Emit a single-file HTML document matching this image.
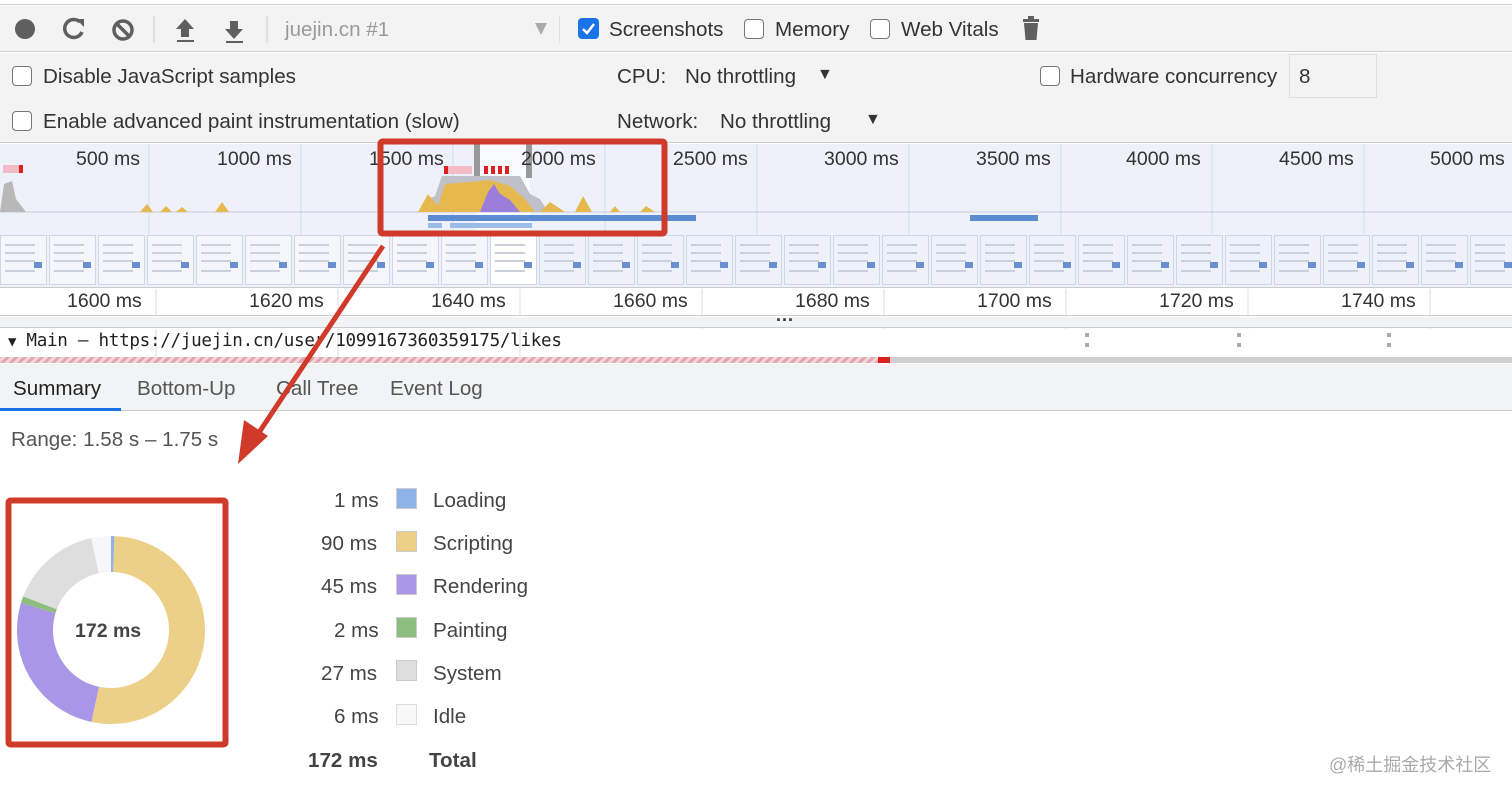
<!DOCTYPE html>
<html><head><meta charset="utf-8">
<style>
*{margin:0;padding:0;box-sizing:border-box}
body{width:1512px;height:795px;overflow:hidden;background:#fff;font-family:"Liberation Sans",Arial,sans-serif;color:#333;position:relative}
.abs{position:absolute}
.t{position:absolute;font-size:20.6px;color:#333;white-space:nowrap}
.cb{position:absolute;width:20px;height:20px;border:1.5px solid #767676;border-radius:4px;background:#fff}
.g{color:#444}
.th{flex:0 0 47px;border:1px solid #cfd6e6;background:#f4f6fb;position:relative}
.th::before{content:"";position:absolute;left:4px;top:8px;width:30px;height:2px;background:#c9cfdb;box-shadow:0 8px 0 #c9cfdb,0 16px 0 #c9cfdb,0 26px 0 #c9cfdb}
.th::after{content:"";position:absolute;right:4px;top:26px;width:8px;height:6px;background:#6a8fd0}
</style></head><body>
<!-- toolbar -->
<div class="abs" style="left:0;top:0;width:1512px;height:5px;background:#fff;border-bottom:1px solid #ccc"></div>
<div class="abs" style="left:0;top:6px;width:1512px;height:46px;background:#f3f3f3;border-bottom:1px solid #d0d0d0"></div>
<svg class="abs" style="left:0;top:6px" width="560" height="46">
 <circle cx="25" cy="23" r="10" fill="#5f5f5f"/>
 <path d="M80 16 A9 9 0 1 0 82 26" fill="none" stroke="#5f5f5f" stroke-width="3.5"/>
 <path d="M76 13 L84 13 L84 21 Z" fill="#5f5f5f"/>
 <circle cx="123" cy="24" r="9" fill="none" stroke="#5f5f5f" stroke-width="3.5"/>
 <path d="M117 18 L129 30" stroke="#5f5f5f" stroke-width="3.5"/>
 <line x1="154" y1="10" x2="154" y2="37" stroke="#ccc"/>
 <path d="M185 13 L194 23 L189 23 L189 31 L181 31 L181 23 L176 23 Z" fill="#5f5f5f"/><rect x="177" y="34" width="17" height="2" fill="#5f5f5f"/>
 <path d="M234 33 L243 23 L238 23 L238 15 L230 15 L230 23 L225 23 Z" fill="#5f5f5f"/><rect x="226" y="35" width="17" height="2" fill="#5f5f5f"/>
 <line x1="267" y1="10" x2="267" y2="37" stroke="#ccc"/>
 <path d="M535 17 L547 17 L541 29 Z" fill="#aaa"/>
 <line x1="560" y1="10" x2="560" y2="37" stroke="#ccc"/>
</svg>
<div class="t" style="left:285px;top:18px;color:#999">juejin.cn #1</div>
<div class="abs" style="left:578px;top:18px;width:21px;height:21px;background:#1a73e8;border-radius:4px"><svg width="21" height="21"><path d="M5 11 L9 15 L16 6" fill="none" stroke="#fff" stroke-width="2.5"/></svg></div>
<div class="t" style="left:609px;top:18px">Screenshots</div>
<div class="cb" style="left:744px;top:19px"></div><div class="t" style="left:775px;top:18px">Memory</div>
<div class="cb" style="left:870px;top:19px"></div><div class="t" style="left:901px;top:18px">Web Vitals</div>
<svg class="abs" style="left:1020px;top:16px" width="22" height="26"><rect x="3" y="3" width="16" height="3" fill="#5f5f5f"/><rect x="8" y="0" width="6" height="3" fill="#5f5f5f"/><path d="M4 7 L18 7 L16.5 24 L5.5 24 Z" fill="#5f5f5f"/></svg>
<!-- settings -->
<div class="abs" style="left:0;top:53px;width:1512px;height:90px;background:#f3f3f3;border-bottom:1px solid #ccc"></div>
<div class="cb" style="left:12px;top:66px"></div><div class="t" style="left:43px;top:65px">Disable JavaScript samples</div>
<div class="cb" style="left:12px;top:111px"></div><div class="t" style="left:43px;top:110px">Enable advanced paint instrumentation (slow)</div>
<div class="t" style="left:617px;top:65px">CPU:</div><div class="t" style="left:685px;top:65px">No throttling</div><div class="t" style="left:817px;top:66px;font-size:16px">▼</div>
<div class="t" style="left:617px;top:110px">Network:</div><div class="t" style="left:720px;top:110px">No throttling</div><div class="t" style="left:865px;top:111px;font-size:16px">▼</div>
<div class="cb" style="left:1040px;top:66px"></div><div class="t" style="left:1070px;top:65px">Hardware concurrency</div>
<div class="abs" style="left:1289px;top:54px;width:88px;height:44px;border:1px solid #ddd;background:#f3f3f3"></div>
<div class="t" style="left:1299px;top:65px">8</div>
<!-- overview -->
<div class="abs" style="left:0;top:144px;width:1512px;height:144px;background:#eef1f9;border-bottom:1px solid #ccc"></div>
<div class="abs" style="left:476px;top:144px;width:54px;height:92px;background:#fafbfe"></div>
<svg class="abs" style="left:0;top:144px" width="1512" height="144">
 <g stroke="#d5dae6"><line x1="149" y1="0" x2="149" y2="90"/><line x1="301" y1="0" x2="301" y2="90"/><line x1="453" y1="0" x2="453" y2="90"/><line x1="605" y1="0" x2="605" y2="90"/><line x1="757" y1="0" x2="757" y2="90"/><line x1="909" y1="0" x2="909" y2="90"/><line x1="1061" y1="0" x2="1061" y2="90"/><line x1="1212" y1="0" x2="1212" y2="90"/><line x1="1364" y1="0" x2="1364" y2="90"/></g>
 <line x1="0" y1="68" x2="1512" y2="68" stroke="#c8ccd6"/>
 <rect x="3" y="21" width="16" height="8" fill="#f2bcc6"/><rect x="19" y="21" width="4" height="8" fill="#e02020"/>
 <path d="M0 68 L4 40 L12 37 L16 55 L26 68 Z" fill="#b8b8b8"/>
 <path d="M140 68 L147 60 L153 68 M160 68 L166 62 L172 68 M176 68 L182 63 L188 68 M215 68 L222 58 L229 68" fill="#e5b94e"/>
 <rect x="444" y="22" width="28" height="8" fill="#f2bcc6"/><rect x="444" y="22" width="4" height="8" fill="#e02020"/>
 <rect x="474" y="0" width="6" height="34" fill="#999"/><rect x="526" y="0" width="6" height="34" fill="#999"/>
 <rect x="484" y="22" width="4" height="8" fill="#e02020"/><rect x="491" y="22" width="4" height="8" fill="#e02020"/><rect x="498" y="22" width="4" height="8" fill="#e02020"/><rect x="505" y="22" width="4" height="8" fill="#e02020"/>
 <path d="M418 68 L428 55 L435 52 L442 32 L520 32 L530 50 L540 55 L548 68 Z" fill="#c0c0c8"/>
 <path d="M418 68 L428 50 L438 62 L445 40 L470 38 L490 36 L510 42 L525 55 L535 68 Z" fill="#e5b94e"/>
 <path d="M540 68 L550 58 L565 68 M575 68 L583 52 L592 68 M610 68 L615 62 L620 68 M640 68 L646 62 L655 68" fill="#e5b94e"/>
 <path d="M480 68 L488 48 L494 40 L500 50 L510 56 L520 68 Z" fill="#9b7ddb"/>
 <rect x="428" y="71" width="268" height="6" fill="#5b8bd1"/>
 <rect x="428" y="79" width="14" height="5" fill="#9bbbe8"/><rect x="450" y="79" width="82" height="5" fill="#9bbbe8"/>
 <rect x="970" y="71" width="68" height="6" fill="#5b8bd1"/>
</svg>
<div class="t" style="left:76px;top:148px;font-size:19.5px">500 ms</div>
<div class="t" style="left:217px;top:148px;font-size:19.5px">1000 ms</div>
<div class="t" style="left:369px;top:148px;font-size:19.5px">1500 ms</div>
<div class="t" style="left:521px;top:148px;font-size:19.5px">2000 ms</div>
<div class="t" style="left:673px;top:148px;font-size:19.5px">2500 ms</div>
<div class="t" style="left:824px;top:148px;font-size:19.5px">3000 ms</div>
<div class="t" style="left:976px;top:148px;font-size:19.5px">3500 ms</div>
<div class="t" style="left:1126px;top:148px;font-size:19.5px">4000 ms</div>
<div class="t" style="left:1279px;top:148px;font-size:19.5px">4500 ms</div>
<div class="t" style="left:1430px;top:148px;font-size:19.5px">5000 ms</div>
<!-- screenshots -->
<div class="abs" style="left:0;top:235px;width:1512px;height:50px;display:flex;gap:2px;overflow:hidden">
 <div class="th"></div><div class="th"></div><div class="th"></div><div class="th"></div><div class="th"></div><div class="th"></div><div class="th"></div><div class="th"></div><div class="th"></div><div class="th"></div><div class="th" style="background:#fff"></div><div class="th" style="background:#eef1f9"></div><div class="th" style="background:#eef1f9"></div><div class="th" style="background:#eef1f9"></div><div class="th" style="background:#eef1f9"></div><div class="th" style="background:#eef1f9"></div><div class="th" style="background:#eef1f9"></div><div class="th" style="background:#eef1f9"></div><div class="th" style="background:#eef1f9"></div><div class="th" style="background:#eef1f9"></div><div class="th" style="background:#eef1f9"></div><div class="th" style="background:#eef1f9"></div><div class="th" style="background:#eef1f9"></div><div class="th" style="background:#eef1f9"></div><div class="th" style="background:#eef1f9"></div><div class="th" style="background:#eef1f9"></div><div class="th" style="background:#eef1f9"></div><div class="th" style="background:#eef1f9"></div><div class="th" style="background:#eef1f9"></div><div class="th" style="background:#eef1f9"></div><div class="th" style="background:#eef1f9"></div>
</div>
<!-- ruler -->
<div class="abs" style="left:0;top:289px;width:1512px;height:27px;background:#fff;border-bottom:1px solid #ccc"></div>
<svg class="abs" style="left:0;top:289px" width="1512" height="75"><g stroke="#ddd"><line x1="156" y1="0" x2="156" y2="27"/><line x1="338" y1="0" x2="338" y2="27"/><line x1="520" y1="0" x2="520" y2="27"/><line x1="702" y1="0" x2="702" y2="68"/><line x1="884" y1="0" x2="884" y2="68"/><line x1="1066" y1="0" x2="1066" y2="68"/><line x1="1248" y1="0" x2="1248" y2="68"/><line x1="1430" y1="0" x2="1430" y2="68"/></g></svg>
<div class="t" style="left:67px;top:290px;font-size:19.5px">1600 ms</div>
<div class="t" style="left:249px;top:290px;font-size:19.5px">1620 ms</div>
<div class="t" style="left:431px;top:290px;font-size:19.5px">1640 ms</div>
<div class="t" style="left:613px;top:290px;font-size:19.5px">1660 ms</div>
<div class="t" style="left:795px;top:290px;font-size:19.5px">1680 ms</div>
<div class="t" style="left:977px;top:290px;font-size:19.5px">1700 ms</div>
<div class="t" style="left:1159px;top:290px;font-size:19.5px">1720 ms</div>
<div class="t" style="left:1341px;top:290px;font-size:19.5px">1740 ms</div>
<div class="abs" style="left:0;top:317px;width:1512px;height:11px;background:#f1f3f4;border-bottom:1px solid #ccc"></div>
<div class="t" style="left:776px;top:305px;font-size:18px;font-weight:bold;letter-spacing:1px">...</div>
<!-- track -->
<div class="abs" style="left:0;top:329px;width:1512px;height:28px;background:#fff"></div>
<svg class="abs" style="left:0;top:329px" width="1512" height="36">
 <g stroke="#ddd"><line x1="156" y1="0" x2="156" y2="28"/><line x1="338" y1="0" x2="338" y2="28"/><line x1="520" y1="0" x2="520" y2="28"/></g>
 <g fill="#aaa"><rect x="1085" y="4" width="4" height="4"/><rect x="1085" y="14" width="4" height="4"/><rect x="1237" y="4" width="4" height="4"/><rect x="1237" y="14" width="4" height="4"/><rect x="1387" y="4" width="4" height="4"/><rect x="1387" y="14" width="4" height="4"/></g>
 <defs><pattern id="st" width="6" height="6" patternUnits="userSpaceOnUse" patternTransform="rotate(45)"><rect width="6" height="6" fill="#f3d6da"/><rect width="3" height="6" fill="#e3a5ae"/></pattern></defs>
 <rect x="0" y="28" width="880" height="6" fill="url(#st)"/><rect x="878" y="28" width="12" height="6" fill="#e02020"/>
 <rect x="890" y="28" width="622" height="6" fill="#cfcfcf"/>
</svg>
<div class="t" style="left:8px;top:331px;font-size:17.6px;font-family:'DejaVu Sans Mono','Liberation Mono',monospace;letter-spacing:-0.3px;color:#222"><span style="font-size:14px">▼</span> Main — https://juejin.cn/user/1099167360359175/likes</div>
<!-- tabs -->
<div class="abs" style="left:0;top:364px;width:1512px;height:47px;background:#f1f3f4;border-bottom:1px solid #ccc"></div>
<div class="abs" style="left:0;top:408px;width:121px;height:3px;background:#1a73e8"></div>
<div class="t" style="left:13px;top:377px;color:#222">Summary</div>
<div class="t" style="left:137px;top:377px;color:#555">Bottom-Up</div>
<div class="t" style="left:276px;top:377px;color:#555">Call Tree</div>
<div class="t" style="left:390px;top:377px;color:#555">Event Log</div>
<div class="t" style="left:11px;top:428px;color:#555">Range: 1.58 s – 1.75 s</div>
<!-- donut -->
<svg class="abs" style="left:0;top:480px" width="240" height="280">
 <g transform="translate(111,150) rotate(-90)" fill="none" stroke-width="36">
  <circle r="76" stroke="#ecd088" stroke-dasharray="251.8 1000" stroke-dashoffset="-2.8"/>
  <circle r="76" stroke="#8fb3e6" stroke-dasharray="2.8 1000"/>
  <circle r="76" stroke="#a996e6" stroke-dasharray="125.6 1000" stroke-dashoffset="-254.6"/>
  <circle r="76" stroke="#8dbd7f" stroke-dasharray="5.6 1000" stroke-dashoffset="-380.2"/>
  <circle r="76" stroke="#dedede" stroke-dasharray="75.5 1000" stroke-dashoffset="-385.8"/>
  <circle r="76" stroke="#f6f7f8" stroke-dasharray="16.7 1000" stroke-dashoffset="-461.3"/>
 </g>
 <rect x="8.5" y="20.5" width="217" height="244" fill="none" stroke="#d03a2a" stroke-width="6" rx="2"/>
</svg>
<div class="t" style="left:75px;top:620px;font-size:19.5px;font-weight:bold;color:#444">172 ms</div>
<!-- legend -->
<div class="t g" style="left:334px;top:489px">1 ms</div>
<div class="t g" style="left:321px;top:532px">90 ms</div>
<div class="t g" style="left:321px;top:575px">45 ms</div>
<div class="t g" style="left:334px;top:619px">2 ms</div>
<div class="t g" style="left:321px;top:662px">27 ms</div>
<div class="t g" style="left:334px;top:705px">6 ms</div>
<div class="t g" style="left:308px;top:749px;font-weight:bold">172 ms</div>
<div class="abs" style="left:396px;top:488px;width:21px;height:21px;background:#8fb3e6;border:1px solid #ccc"></div>
<div class="abs" style="left:396px;top:531px;width:21px;height:21px;background:#ecd088;border:1px solid #ccc"></div>
<div class="abs" style="left:396px;top:574px;width:21px;height:21px;background:#a996e6;border:1px solid #ccc"></div>
<div class="abs" style="left:396px;top:617px;width:21px;height:21px;background:#8dbd7f;border:1px solid #ccc"></div>
<div class="abs" style="left:396px;top:660px;width:21px;height:21px;background:#dedede;border:1px solid #ccc"></div>
<div class="abs" style="left:396px;top:704px;width:21px;height:21px;background:#f8f8f8;border:1px solid #ddd"></div>
<div class="t g" style="left:433px;top:489px">Loading</div>
<div class="t g" style="left:433px;top:532px">Scripting</div>
<div class="t g" style="left:433px;top:575px">Rendering</div>
<div class="t g" style="left:433px;top:619px">Painting</div>
<div class="t g" style="left:433px;top:662px">System</div>
<div class="t g" style="left:433px;top:705px">Idle</div>
<div class="t g" style="left:429px;top:749px;font-weight:bold">Total</div>
<div class="t" style="left:1329px;top:751px;font-size:18px;color:#aaa;font-family:'Liberation Sans','Noto Sans CJK SC',sans-serif">@稀土掘金技术社区</div>
<!-- red box and arrow -->
<svg class="abs" style="left:0;top:0" width="1512" height="795">
 <rect x="380.5" y="141.5" width="284" height="92" fill="none" stroke="#d03a2a" stroke-width="6" rx="2"/>
 <line x1="383" y1="246" x2="256" y2="437" stroke="#d03a2a" stroke-width="5"/>
 <path d="M238 464 L244 420 L268 436 Z" fill="#d03a2a"/>
</svg>
</body></html>
